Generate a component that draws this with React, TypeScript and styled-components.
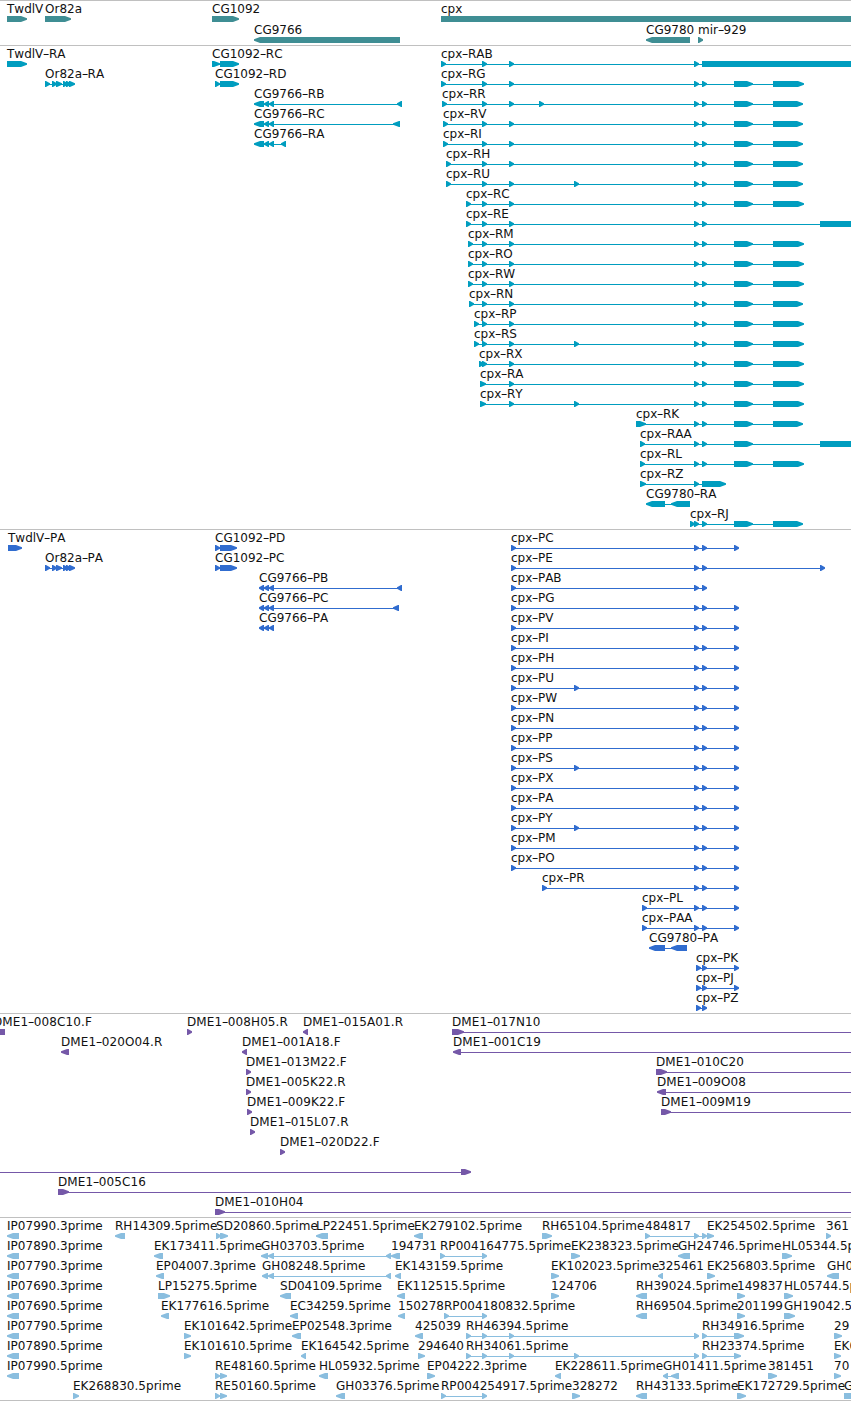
import React from 'react';
import styled, { createGlobalStyle } from 'styled-components';

const GlobalStyle = createGlobalStyle`
  body { margin: 0; background: #fff; }
`;

const Browser = styled.main`
  display: flex;
  flex-direction: column;
  box-sizing: border-box;
  width: 851px;
  height: 1401px;
  overflow: hidden;
  background: #fff;
  border-bottom: 1px solid #c0c0c0;
`;

const Track = styled.section<{ $color: string; $pad: number }>`
  flex: none;
  border-top: 1px solid #c0c0c0;
  padding-bottom: ${(p) => p.$pad}px;
  color: ${(p) => p.$color};
`;

const Row = styled.div<{ $height: number }>`
  position: relative;
  box-sizing: border-box;
  height: ${(p) => p.$height}px;
  padding-top: 15px;
`;

const Label = styled.span<{ $x: number; $spacing: number }>`
  position: absolute;
  top: 1px;
  left: ${(p) => p.$x}px;
  font: 12px/15px 'DejaVu Sans', sans-serif;
  font-kerning: none;
  letter-spacing: ${(p) => p.$spacing}px;
  white-space: nowrap;
  color: #111;
`;

const Hyphen = styled.span`
  display: inline-block;
  width: 5.6px;
  letter-spacing: 0;
  transform: scaleX(1.55);
  transform-origin: 40% 50%;
  text-align: center;
`;

const Strand = styled.svg`
  display: block;
  width: 851px;
  height: 6px;
  overflow: visible;
  fill: currentColor;
`;

/* Feature notation: "name@x segments", segments being
   R/L (arrow pointing right/left), B (plain box) or N (intron line),
   each with start-end; the end defaults to start+5. */
type Segment = { kind: string; start: number; end: number };
type Feature = { name: string; x: number; segments: Segment[] };

const parseFeature = (text: string): Feature => {
  const [head, ...parts] = text.trim().split(/\s+/);
  const [name, x] = head.split('@');
  const segments = parts.map((part) => {
    const [start, end] = part.slice(1).split('-').map(Number);
    return { kind: part[0], start, end: end ?? start + 5 };
  });
  return { name, x: Number(x), segments };
};

const segmentPath = ({ kind, start, end }: Segment) => {
  const tip = Math.min(end - start - 1, 6);
  if (kind === 'R') {
    return `M${start} 0H${end - tip}L${end} 2.3V3.7L${end - tip} 6H${start}Z`;
  }
  if (kind === 'L') {
    return `M${end} 0H${start + tip}L${start} 2.3V3.7L${start + tip} 6H${end}Z`;
  }
  if (kind === 'N') return `M${start} 3H${end}V4H${start}Z`;
  return `M${start} 0H${end}V6H${start}Z`;
};

const Glyphs = ({ feature }: { feature: Feature }) => {
  const { segments } = feature;
  const from = segments[0].start + 1;
  const to = segments[segments.length - 1].end - 1;
  return (
    <>
      {segments.length > 1 && <rect x={from} y={3} width={to - from} height={1} />}
      {segments.map((s, i) => (
        <path key={i} d={segmentPath(s)} />
      ))}
    </>
  );
};

const FeatureName = ({ name }: { name: string }) => {
  const [before, after] = name.split('-');
  return after === undefined ? <>{before}</> : <>{before}<Hyphen>-</Hyphen>{after}</>;
};

const TAIL4 = 'R694 R702 R734-753 R773-804';
const TAIL3 = 'R694 R702 R734-753 R773-803';
const AB = 'R482 R509';
const PT = 'R694 R702 R734-739';
const OR = 'R45-50 R52-57 R56-62 R63-68 R66-71 R69-75';

const cpxP = (name: string, extra = '') => `cpx-${name}@511 R511 ${extra} ${PT}`;

const TRACKS = [
  {
    color: '#3f8e94', rowHeight: 21, pad: 2, spacing: 0,
    rows: [
      'TwdlV@7 R7-27|Or82a@45 R45-71|CG1092@212 R212-239|cpx@441 B441-851',
      'CG9766@254 L254-400|CG9780@646 L646-690|mir-929@698 R698-703',
    ],
  },
  {
    color: '#009dbf', rowHeight: 20, pad: 3, spacing: 0,
    rows: [
      `TwdlV-RA@7 R7-27|CG1092-RC@212 R212-220 R220-239|cpx-RAB@441 R441 ${AB} R694 B702-851`,
      `Or82a-RA@45 ${OR}|CG1092-RD@215 R215-220 R220-239|cpx-RG@441 R441 ${AB} ${TAIL4}`,
      `CG9766-RB@254 L254-264 L264-269 L269-274 L397-402|cpx-RR@442 R442 ${AB} R539 ${TAIL3}`,
      `CG9766-RC@254 L254-264 L264-269 L269-274 L393-400|cpx-RV@443 R443 ${AB} ${TAIL3}`,
      `CG9766-RA@254 L254-264 L264-269 L269-274 L281-286|cpx-RI@443 R443 ${AB} ${TAIL3}`,
      `cpx-RH@446 R446 ${AB} ${TAIL3}`,
      `cpx-RU@446 R446 ${AB} R574 ${TAIL3}`,
      `cpx-RC@466 R466 ${AB} ${TAIL4}`,
      `cpx-RE@466 R466 ${AB} R694 R702 B820-851`,
      `cpx-RM@468 R468 ${AB} ${TAIL4}`,
      `cpx-RO@468 R468 ${AB} ${TAIL4}`,
      `cpx-RW@468 R468 ${AB} ${TAIL4}`,
      `cpx-RN@469 R469 ${AB} ${TAIL3}`,
      `cpx-RP@474 R474 ${AB} ${TAIL4}`,
      `cpx-RS@474 R474 ${AB} R574 ${TAIL4}`,
      `cpx-RX@479 R479 ${AB} ${TAIL4}`,
      `cpx-RA@480 R480-486 R509 ${TAIL4}`,
      `cpx-RY@480 R480-486 R509 R574 ${TAIL4}`,
      `cpx-RK@636 R636-646 ${TAIL3}`,
      'cpx-RAA@640 R640 R694 R702 R734-753 B820-851',
      `cpx-RL@640 R640 ${TAIL4}`,
      'cpx-RZ@640 R640-646 R694 R702-726',
      'CG9780-RA@646 L646-665 L671-690',
      `cpx-RJ@690 R690 ${TAIL3}`,
    ],
  },
  {
    color: '#306ccf', rowHeight: 20, pad: 3, spacing: 0,
    rows: [
      `TwdlV-PA@8 R8-22|CG1092-PD@215 R215-220 R220-237|${cpxP('PC')}`,
      `Or82a-PA@45 ${OR}|CG1092-PC@215 R215-220 R220-237|${cpxP('PE').replace('R734-739', 'R820')}`,
      'CG9766-PB@259 L259 L264 L269 L397-402|cpx-PAB@511 R511 R694 R702',
      `CG9766-PC@259 L259 L264 L269 L393-399|${cpxP('PG')}`,
      `CG9766-PA@259 L259 L264 L269|${cpxP('PV')}`,
      cpxP('PI'),
      cpxP('PH'),
      cpxP('PU', 'R574'),
      cpxP('PW'),
      cpxP('PN'),
      cpxP('PP'),
      cpxP('PS', 'R574'),
      cpxP('PX'),
      cpxP('PA'),
      cpxP('PY', 'R574'),
      cpxP('PM'),
      cpxP('PO'),
      `cpx-PR@542 R542 ${PT}`,
      `cpx-PL@642 R642 ${PT}`,
      `cpx-PAA@642 R642 ${PT}`,
      'CG9780-PA@649 L649-665 L671-687',
      'cpx-PK@696 R696 R702 R734',
      'cpx-PJ@696 R696 R702 R734',
      'cpx-PZ@696 R696 R702',
    ],
  },
  {
    color: '#7558a8', rowHeight: 20, pad: 3, spacing: 0.1,
    rows: [
      'DME1-008C10.F@-7 B-5-4|DME1-008H05.R@187 R187|DME1-015A01.R@303 L303|DME1-017N10@452 R452-464 N463-851',
      'DME1-020O04.R@61 L61-69|DME1-001A18.F@242 L242|DME1-001C19@453 L453-461 N460-851',
      'DME1-013M22.F@246 R246|DME1-010C20@656 R656-667 N666-851',
      'DME1-005K22.R@246 R246|DME1-009O08@657 L657-666 N665-851',
      'DME1-009K22.F@247 R247|DME1-009M19@661 R661-671 N670-851',
      'DME1-015L07.R@250 R250',
      'DME1-020D22.F@280 R280',
      '@0 N0-462 R461-471',
      'DME1-005C16@58 R58-69 N68-851',
      'DME1-010H04@215 R215-225 N224-851',
    ],
  },
  {
    color: '#8abedf', rowHeight: 20, pad: 2, spacing: 0.03,
    rows: [
      'IP07990.3prime@7 L7-19|RH14309.5prime@115 L115-125|SD20860.5prime@216 R216 R220-228|LP22451.5prime@316 L316-328|EK279102.5prime@414 L414-423|RH65104.5prime@542 R542-552|484817@645 R645 R694 R702|EK254502.5prime@707 R707-714|361@826 R826',
      'IP07890.3prime@7 L7-19|EK173411.5prime@154 L154-163|GH03703.5prime@261 L261-268 L268-274 L386|194731@391 L391-400|RP004164775.5prime@440 R440 R482|EK238323.5prime@571 R571-580|GH24746.5prime@678 L678-690|HL05344.5prime@782 R782-792',
      'IP07790.3prime@7 L7-19|EP04007.3prime@156 L156-164|GH08248.5prime@262 L262-268 L268-274 L386|EK143159.5prime@395 L395-401|EK102023.5prime@551 R551-559|325461@658 L658|EK256803.5prime@707 R707-715|GH0@827 L827-839',
      'IP07690.3prime@7 L7-19|LP15275.5prime@158 R158-170|SD04109.5prime@280 L280-291|EK112515.5prime@397 L397-405|124706@551 R551-559|RH39024.5prime@636 L636-647|149837@737 R737-745|HL05744.5prime@784 R784-793',
      'IP07690.5prime@7 L7-19|EK177616.5prime@161 L161-169|EC34259.5prime@290 L290-298|150278@398 L398-405|RP004180832.5prime@444 R444 R482|RH69504.5prime@636 L636-647|201199@737 R737-745|GH19042.5prime@784 R784-795',
      'IP07790.5prime@7 L7-19|EK101642.5prime@184 R184-191|EP02548.3prime@292 L292-301|425039@415 L415-423|RH46394.5prime@466 R466 R482 R509 R694|RH34916.5prime@702 R702 R734-744|29@834 R834-842',
      'IP07890.5prime@7 L7-19|EK101610.5prime@184 R184-191|EK164542.5prime@301 L301|294640@418 R418-425|RH34061.5prime@466 R466 R482 R509 R574 R694|RH23374.5prime@702 R702 R734-741|EK0@834 R834-841',
      'IP07990.5prime@7 L7-19|RE48160.5prime@215 R215 R220-227|HL05932.5prime@319 L319-328|EP04222.3prime@427 R427-435|EK228611.5prime@555 L555-561|GH01411.5prime@663 L663 L671-679|381451@768 R768-777|70@834 R834-841',
      'EK268830.5prime@73 R73-79|RE50160.5prime@215 R215 R220-227|GH03376.5prime@336 L336-345|RP004254917.5prime@441 R441 R482|328272@572 R572-580|RH43133.5prime@636 L636-647|EK172729.5prime@737 R737-746|G@844 B844-851',
    ],
  },
].map((track) => ({
  ...track,
  rows: track.rows.map((row) => row.split('|').map(parseFeature)),
}));

export default function App() {
  return (
    <>
      <GlobalStyle />
      <Browser>
        {TRACKS.map((track, t) => (
          <Track key={t} $color={track.color} $pad={track.pad}>
            {track.rows.map((features, r) => (
              <Row key={r} $height={track.rowHeight}>
                {features.map((f, i) => f.name && (
                  <Label key={i} $x={f.x} $spacing={track.spacing}>
                    <FeatureName name={f.name} />
                  </Label>
                ))}
                <Strand>
                  {features.map((f, i) => <Glyphs key={i} feature={f} />)}
                </Strand>
              </Row>
            ))}
          </Track>
        ))}
      </Browser>
    </>
  );
}
